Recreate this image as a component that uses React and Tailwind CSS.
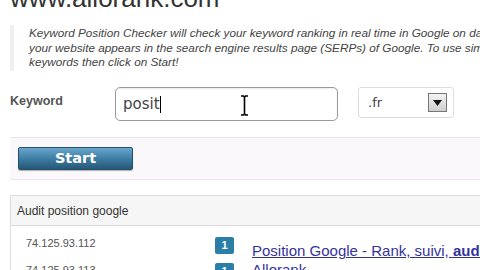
export default function App() {
  return (
    <div className="relative w-[480px] h-[270px] overflow-hidden bg-white font-['Liberation_Sans',Arial,sans-serif]">
      {/* site title, cut at top */}
      <h1 className="ml-[10px] -mt-[15px] text-[26px] leading-[26px] text-[#333] whitespace-nowrap">www.allorank.com</h1>

      {/* intro */}
      <div className="ml-[10px] mt-[14px] h-[46px] border-l-4 border-[#efefef] pl-[15px] pt-[1px] overflow-hidden">
        <p className="text-[11.75px] leading-[14.5px] italic text-[#444] whitespace-nowrap">
          Keyword Position Checker will check your keyword ranking in real time in Google on daily basis.<br />
          your website appears in the search engine results page (SERPs) of Google. To use simply enter your<br />
          keywords then click on Start!
        </p>
      </div>

      {/* keyword row */}
      <div className="flex items-start mt-[16px] h-[34px]">
        <label className="w-[115px] shrink-0 pl-[10px] pt-[5px] text-[12.5px] font-bold text-[#555]">Keyword</label>
        <div className="w-[223px] shrink-0 h-[34px] rounded-[5px] border border-[#9a9a9a] bg-white flex items-center pl-[7px] shadow-[inset_0_1px_2px_rgba(0,0,0,0.08)]">
          <span className="font-['DejaVu_Sans',sans-serif] text-[15px] text-[#444]">posit</span>
          <span className="w-px h-[17px] bg-black" />
        </div>
        <div className="ml-[20px] shrink-0 w-[96px] h-[31px] rounded-[3px] border border-[#ddd] bg-white flex items-center justify-between pl-[9px] pr-[6px]">
          <span className="font-['DejaVu_Sans',sans-serif] text-[13px] text-[#444]">.fr</span>
          <span className="w-[19px] h-[19px] border border-[#777] bg-gradient-to-b from-[#f2f2f2] to-[#cfcfcf] flex items-center justify-center">
            <svg width="9" height="6" viewBox="0 0 9 6"><path d="M0 0h9L4.5 6z" fill="#111" /></svg>
          </span>
        </div>
      </div>

      {/* start bar */}
      <div className="ml-[10px] mt-[16px] h-[43px] border-y border-[#ebe6eb] bg-[#faf8fa] flex items-center pl-[8px]">
        <button className="w-[115px] h-[23px] rounded-[2px] border border-[#24506c] bg-gradient-to-b from-[#6aa6cb] via-[#3f7ea6] to-[#275775] text-white font-bold font-['DejaVu_Sans',sans-serif] text-[14.5px] leading-none shadow-[0_1px_1px_rgba(0,0,0,0.3)]">
          Start
        </button>
      </div>

      {/* audit table */}
      <div className="ml-[10px] mt-[15px] border border-[#dcdcdc] border-r-0">
        <div className="h-[30px] bg-[#f6f6f6] border-b border-[#dcdcdc] flex items-center pl-[6px] text-[12px] text-[#333]">
          Audit position google
        </div>
        <div className="flex items-start h-[26px] pt-[11px]">
          <span className="mt-[1px] shrink-0 w-[204px] pl-[15px] text-[11px] text-[#555] leading-none">74.125.93.112</span>
          <span className="shrink-0 w-[19px] h-[17px] rounded-[2px] bg-[#2b7fa7] text-white text-[11px] font-bold flex items-center justify-center">1</span>
          <a className="ml-[18px] shrink-0 mt-[6px] text-[15px] leading-[16px] text-[#33339b] underline whitespace-nowrap">
            Position Google - Rank, suivi, <b>audit</b>
          </a>
        </div>
        <div className="flex items-start h-[26px] pt-[11px]">
          <span className="mt-[2px] shrink-0 w-[204px] pl-[15px] text-[11px] text-[#555] leading-none">74.125.93.113</span>
          <span className="shrink-0 w-[19px] h-[17px] rounded-[2px] bg-[#2b7fa7] text-white text-[11px] font-bold flex items-center justify-center">1</span>
          <a className="ml-[18px] shrink-0 -mt-[1px] text-[15px] leading-[16px] text-[#33339b] whitespace-nowrap">Allorank</a>
        </div>
      </div>

      {/* I-beam mouse cursor */}
      <svg className="absolute left-[240px] top-[95px]" width="9" height="21" viewBox="0 0 9 21">
        <path d="M1 1h2.5l1 1 1-1H8M4.5 2v17M1 20h2.5l1-1 1 1H8" stroke="#000" strokeWidth="1.6" fill="none" />
      </svg>
    </div>
  )
}
